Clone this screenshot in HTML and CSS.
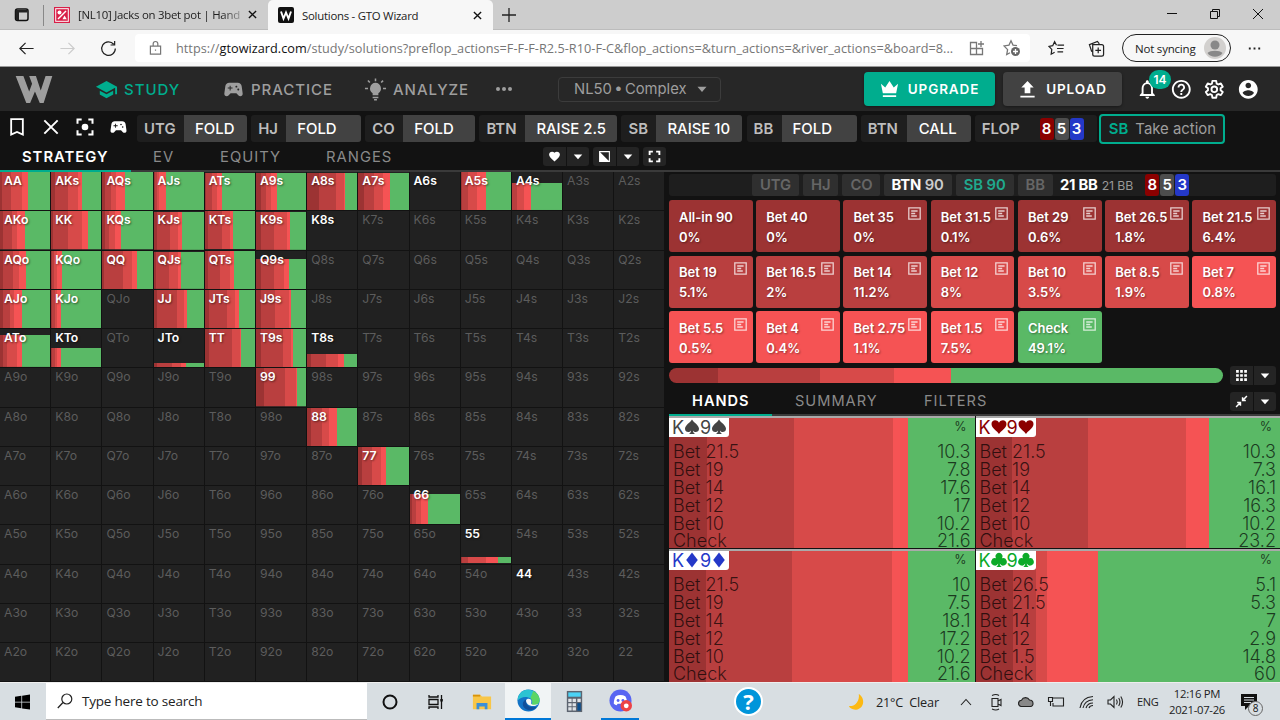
FILE: index.html
```
<!DOCTYPE html>
<html lang="en">
<head>
    <meta charset="UTF-8">
    <meta name="viewport" content="width=device-width, initial-scale=1.0">
    <title>Solutions - GTO Wizard</title>
    <link rel="stylesheet" href="styles.css">
</head>
<body>
    <svg class="sprite">
        <symbol id="gamepad" viewBox="0 0 24 24"><path d="M21.58 16.09l-1.09-7.66C20.21 6.46 18.52 5 16.53 5H7.47C5.48 5 3.79 6.46 3.51 8.43l-1.09 7.66C2.2 17.63 3.39 19 4.94 19c.68 0 1.32-.27 1.8-.75L9 16h6l2.25 2.25c.48.48 1.13.75 1.8.75 1.56 0 2.75-1.37 2.53-2.91zM11 11H9v2H8v-2H6v-1h2V8h1v2h2v1zm4-1c-.55 0-1-.45-1-1s.45-1 1-1 1 .45 1 1-.45 1-1 1zm2 3c-.55 0-1-.45-1-1s.45-1 1-1 1 .45 1 1-.45 1-1 1z"/></symbol>
        <symbol id="caret" viewBox="0 0 24 24"><path d="M6 9h12l-6 7z"/></symbol>
        <symbol id="close" viewBox="0 0 10 10"><path d="M1 1l8 8M9 1l-8 8" fill="none" stroke="currentColor" stroke-width="1.5"/></symbol>
        <symbol id="note" viewBox="0 0 13 13"><path d="M.8 .8h11.4v11.4H.8zM3.2 4h6.4M3.2 6.5h4M3.2 9h5.6" fill="none" stroke="currentColor" stroke-width="1.3"/></symbol>
        <symbol id="s" viewBox="0 0 16 16"><path d="M8 .5C6.500 3.500 1 6 1 9.800c0 3.400 4.300 4.400 6 1.700 0 1.800-.7 2.700-2 3.500h6c-1.300-.8-2-1.700-2-3.500 1.700 2.700 6 1.700 6-1.700C15 6 9.500 3.500 8 .5z"/></symbol>
        <symbol id="h" viewBox="0 0 16 16"><path d="M8 15C6.500 12 .5 9 .5 4.900.5.800 6 0 8 3.800 10 0 15.500.800 15.500 4.900 15.500 9 9.500 12 8 15z"/></symbol>
        <symbol id="d" viewBox="0 0 16 16"><path d="M8 .5L13.800 8 8 15.500 2.200 8z"/></symbol>
        <symbol id="c" viewBox="0 0 16 16"><path d="M8 .8a3.500 3.500 0 0 0-2.900 5.500A3.700 3.700 0 1 0 7.200 11.500C7.200 13 6.500 14.300 5.300 15h5.400c-1.200-.7-1.900-2-1.900-3.500A3.700 3.700 0 1 0 10.900 6.300 3.500 3.500 0 0 0 8 .8z"/></symbol>
    </svg>

    <!-- Browser -->
    <div class="tab-strip">
        <svg class="tab-menu" viewBox="0 0 16 16"><rect x="1.500" y="2" width="12.500" height="11.500" rx="2" fill="none" stroke="#111" stroke-width="1.500"/><path d="M1.500 3h12v2.500H5V13H2z"/></svg>
        <div class="tab">
            <svg class="favicon" viewBox="0 0 16 16"><path fill="#d81f48" d="M0 0h16v16H0z"/><path fill="#fff" d="M1.200 1.200h13.600v13.600H1.200z"/><path fill="#d81f48" d="M2.200 2.200h11.600v11.600H2.200z"/><path stroke="#fff" stroke-width="1.500" d="M12 4l-8 8"/><circle cx="5.500" cy="5.500" r="2" fill="#fff"/><path fill="#fff" d="M10.500 8.500l2.300 3.700H8.500z"/></svg>
            <span class="tab-title fade">[NL10] Jacks on 3bet pot | Hand</span>
            <svg class="tab-close"><use href="#close"/></svg>
        </div>
        <div class="tab active">
            <svg class="favicon" viewBox="0 0 16 16"><rect width="16" height="16" rx="2" fill="#111"/><path d="M3 4.500l2.500 7L8 5.500l2.500 6 2.500-7" fill="none" stroke="#fff" stroke-width="1.900"/></svg>
            <span class="tab-title">Solutions - GTO Wizard</span>
            <svg class="tab-close"><use href="#close"/></svg>
        </div>
        <svg class="new-tab" viewBox="0 0 14 14"><path d="M7 0v14M0 7h14" stroke="#222" stroke-width="1.300"/></svg>
        <div class="window-buttons">
            <svg viewBox="0 0 12 12"><path d="M1 5.500h10" stroke="#111"/></svg>
            <svg class="restore" viewBox="0 0 12 12"><path d="M1.500 3.500h7v7h-7zM3.500 3.500v-2h7v7h-2"/></svg>
            <svg viewBox="0 0 12 12"><path d="M1 1l10 10M11 1L1 11" stroke="#111"/></svg>
        </div>
    </div>
    <div class="toolbar">
        <svg class="tool back" viewBox="0 0 18 18"><path d="M16.500 9H2M8 3L2 9l6 6"/></svg>
        <svg class="tool forward" viewBox="0 0 18 18"><path d="M1.500 9H16M10 3l6 6-6 6"/></svg>
        <svg class="tool reload" viewBox="0 0 18 18"><path d="M14.500 4.500A7.200 7.200 0 1 0 16.200 9M15.500 1v4.300h-4.300"/></svg>
        <div class="address">
            <svg class="lock" viewBox="0 0 14 16"><path d="M1.500 6h11v8.500h-11zM4.500 6V3.500a2.500 2.500 0 0 1 5 0V6M7 9.500v1.500"/></svg>
            <span class="url">https://<b>gtowizard.com</b>/study/solutions?preflop_actions=F-F-F-R2.5-R10-F-C&amp;flop_actions=&amp;turn_actions=&amp;river_actions=&amp;board=8...</span>
            <svg class="apps" viewBox="0 0 16 16"><path d="M1.500 2.500h6v12h-6zM1.500 8.500h12v6h-12M12 1v6M9 4h6"/></svg>
            <svg class="star" viewBox="0 0 18 18"><path d="M14 6.700l-4-.6-2-4.300-2 4.300-5 .8 3.600 3.700-.9 5 3.300-1.800"/><circle class="plus" cx="12.500" cy="12.500" r="4.500"/><path d="M12.500 10v5M10 12.500h5" class="plus-line"/></svg>
        </div>
        <svg class="tool fav" viewBox="0 0 18 18"><path d="M9 5.500L7 1.800 5 6l-4 .8 3 3.200-.6 5 3.600-2M10 5.500h7M9.500 9h7M10 12.500h6"/></svg>
        <svg class="tool collect" viewBox="0 0 18 18"><path d="M4 12.500L1.500 5 10 1.500 12 4M5 5h9.500a2 2 0 0 1 2 2v8a2 2 0 0 1-2 2H7a2 2 0 0 1-2-2zM10.800 8v6M7.800 11h6"/></svg>
        <div class="sync">Not syncing
            <svg viewBox="0 0 22 22"><circle cx="11" cy="11" r="11" fill="#d2d0ce"/><circle cx="11" cy="8" r="4.500" fill="#888"/><path d="M3.500 16c3-3 12-3 15 0-3 5-12 5-15 0z" fill="#888"/></svg>
        </div>
        <svg class="tool dots" viewBox="0 0 18 18"><path d="M3 9h2M8 9h2M13 9h2"/></svg>
    </div>

    <!-- App header -->
    <header class="nav">
        <svg class="logo" viewBox="0 0 38 28"><path d="M0 0h8l6 16 3-8-3-8h7l5 15 5-15h7l-9 28h-4l-5-12-5 12h-4z"/></svg>
        <a class="nav-item study"><svg viewBox="0 0 24 24"><path d="M5 13.180v4L12 21l7-3.820v-4L12 17l-7-3.820zM12 3L1 9l11 6 9-4.910V17h2V9L12 3z"/></svg>STUDY</a>
        <a class="nav-item practice"><svg><use href="#gamepad"/></svg>PRACTICE</a>
        <a class="nav-item analyze"><svg viewBox="0 0 24 24"><path d="M12 5a6 6 0 0 0-3 11v2h6v-2a6 6 0 0 0-3-11zM9 19.500h6V21H9zM10.500 22h3v1.500h-3zM11.200 .5h1.600v3h-1.600zM1 10.200h3.200v1.600H1zM19.800 10.200H23v1.600h-3.200zM3.500 3.200l1.200-1.100 2 2-1.200 1.200zM17.300 4.200l2-2 1.200 1.100-2 2z"/></svg>ANALYZE</a>
        <svg class="more" viewBox="0 0 16 6"><circle cx="2" cy="3" r="2"/><circle cx="8" cy="3" r="2"/><circle cx="14" cy="3" r="2"/></svg>
        <div class="select">NL50 • Complex<svg><use href="#caret"/></svg></div>
        <button class="btn upgrade"><svg viewBox="0 0 20 20"><path d="M1 4l4.500 4L10 1l4.500 7L19 4l-2 10H3zM3 16h14v2H3z"/></svg>UPGRADE</button>
        <button class="btn upload"><svg viewBox="0 0 20 20"><path d="M10 1l6.500 7H13v6H7V8H3.500zM2.500 16.500h15v2h-15z"/></svg>UPLOAD</button>
        <div class="nav-icons">
            <div class="bell"><svg viewBox="0 0 24 24"><path d="M12 22c1.100 0 2-.9 2-2h-4c0 1.100.89 2 2 2zm6-6v-5c0-3.070-1.630-5.640-4.500-6.320V4c0-.83-.67-1.500-1.500-1.500s-1.500.67-1.500 1.500v.68C7.640 5.360 6 7.920 6 11v5l-2 2v1h16v-1l-2-2zm-2 1H8v-6c0-2.480 1.510-4.500 4-4.500s4 2.020 4 4.500v6z"/></svg><span class="badge">14</span></div>
            <svg viewBox="0 0 24 24"><path d="M11 18h2v-2h-2v2zm1-16C6.480 2 2 6.480 2 12s4.480 10 10 10 10-4.480 10-10S17.520 2 12 2zm0 18c-4.410 0-8-3.590-8-8s3.590-8 8-8 8 3.590 8 8-3.590 8-8 8zm0-14c-2.210 0-4 1.790-4 4h2c0-1.100.9-2 2-2s2 .9 2 2c0 2-3 1.750-3 5h2c0-2.250 3-2.500 3-5 0-2.210-1.790-4-4-4z"/></svg>
            <svg viewBox="0 0 24 24"><path fill="none" stroke="#fff" stroke-width="2" stroke-linejoin="round" d="M10 3h4l.5 2.900 1.800 1L19 5.800l2 3.400-2.300 1.800v2l2.300 1.800-2 3.400-2.700-1.100-1.800 1L14 21h-4l-.5-2.900-1.800-1L5 18.200l-2-3.400L5.300 13v-2L3 9.200l2-3.400 2.700 1.100 1.800-1z"/><circle cx="12" cy="12" r="3" fill="none" stroke="#fff" stroke-width="2"/></svg>
            <svg viewBox="0 0 24 24"><path d="M12 2C6.480 2 2 6.480 2 12s4.480 10 10 10 10-4.480 10-10S17.520 2 12 2zm0 3c1.660 0 3 1.340 3 3s-1.340 3-3 3-3-1.340-3-3 1.340-3 3-3zm0 14.200c-2.500 0-4.710-1.280-6-3.220.03-1.990 4-3.080 6-3.080 1.990 0 5.970 1.090 6 3.080-1.290 1.940-3.500 3.220-6 3.220z"/></svg>
        </div>
    </header>

    <!-- Action history -->
    <div class="history">
        <div class="history-icons">
            <svg viewBox="0 0 24 24"><path d="M5 2.500h14v18.500l-7-3-7 3z" fill="none" stroke="#fff" stroke-width="2.200"/></svg>
            <svg viewBox="0 0 24 24"><path d="M4 4l16 16M20 4L4 20" stroke="#fff" stroke-width="2.300"/></svg>
            <svg viewBox="0 0 24 24"><path d="M8 3H3v5M16 3h5v5M8 21H3v-5M16 21h5v-5" fill="none" stroke="#fff" stroke-width="2.400"/><circle cx="12" cy="12" r="4"/></svg>
            <svg class="pad"><use href="#gamepad"/></svg>
        </div>
        <div class="step utg"><b>UTG</b><span>FOLD</span></div>
        <div class="step hj"><b>HJ</b><span>FOLD</span></div>
        <div class="step co"><b>CO</b><span>FOLD</span></div>
        <div class="step btn-r"><b>BTN</b><span>RAISE 2.5</span></div>
        <div class="step sb"><b>SB</b><span>RAISE 10</span></div>
        <div class="step bb"><b>BB</b><span>FOLD</span></div>
        <div class="step btn-c"><b>BTN</b><span>CALL</span></div>
        <div class="step flop"><b>FLOP</b><div class="board"><i class="red">8</i><i class="grey">5</i><i class="blue">3</i></div></div>
        <div class="take"><b>SB</b>Take action</div>
    </div>

    <main class="main">
        <section class="left">
            <div class="tabs">
                <a class="on strategy">STRATEGY</a><a class="ev">EV</a><a class="equity">EQUITY</a><a class="ranges">RANGES</a>
                <div class="split"><svg viewBox="0 0 24 24"><path d="M12 21.350l-1.450-1.320C5.400 15.360 2 12.280 2 8.500 2 5.420 4.420 3 7.500 3c1.740 0 3.410.81 4.500 2.090C13.090 3.810 14.760 3 16.500 3 19.580 3 22 5.420 22 8.500c0 3.780-3.400 6.860-8.550 11.540L12 21.350z"/></svg><svg class="arrow"><use href="#caret"/></svg></div>
                <div class="split"><svg viewBox="0 0 24 24"><path d="M3 3h18v18H3z" fill="none" stroke="#fff" stroke-width="2"/><path d="M3 3v18h18z"/></svg><svg class="arrow"><use href="#caret"/></svg></div>
                <div class="split single"><svg viewBox="0 0 24 24"><path d="M9 3H3v6M15 3h6v6M9 21H3v-6M15 21h6v-6" fill="none" stroke="#fff" stroke-width="3.500"/></svg></div>
            </div>
            <div class="range" id="range"></div>
        </section>

        <section class="right">
            <div class="players">
                <span>UTG</span><span>HJ</span><span>CO</span><span class="live">BTN <em>90</em></span><span class="hero">SB 90</span><span>BB</span>
                <strong>21 BB</strong><small>21 BB</small>
                <div class="board"><i class="red">8</i><i class="grey">5</i><i class="blue">3</i></div>
            </div>
            <div class="bets" id="bets"></div>
            <div class="freq">
                <div class="freq-bar" id="freq-bar"></div>
                <div class="split"><svg viewBox="0 0 24 24"><path d="M2 2h5v5H2zM9.500 2h5v5h-5zM17 2h5v5h-5zM2 9.500h5v5H2zM9.500 9.500h5v5h-5zM17 9.500h5v5h-5zM2 17h5v5H2zM9.500 17h5v5h-5zM17 17h5v5h-5z"/></svg><svg class="arrow"><use href="#caret"/></svg></div>
            </div>
            <div class="hand-tabs">
                <a class="on">HANDS</a><a class="summary">SUMMARY</a><a>FILTERS</a>
                <div class="split"><svg viewBox="0 0 24 24"><path d="M22 2l-8 8M2 22l8-8M14 4v6h6M4 14h6v6" fill="none" stroke="#fff" stroke-width="2.800"/></svg><svg class="arrow"><use href="#caret"/></svg></div>
            </div>
            <div class="hands" id="hands"></div>
        </section>
    </main>

    <!-- Windows taskbar -->
    <footer class="taskbar">
        <div class="start"><svg viewBox="0 0 16 16"><path d="M0 2.300L6.800 1.300v6.300H0zM7.600 1.200L16 0v7.600H7.600zM0 8.400h6.800v6.300L0 13.700zM7.600 8.400H16V16l-8.400-1.200z"/></svg></div>
        <div class="search"><svg viewBox="0 0 16 16"><circle cx="9.800" cy="6" r="5" fill="none" stroke="#222" stroke-width="1.200"/><path d="M6 9.500L.8 15" stroke="#222" stroke-width="1.300"/></svg>Type here to search</div>
        <div class="app"><svg viewBox="0 0 20 20"><circle cx="10" cy="10" r="6.500" fill="none" stroke="#111" stroke-width="2"/></svg></div>
        <div class="app"><svg viewBox="0 0 20 20"><path d="M3 3v2h9V3M3 17v-2h9v2M3 7.500h9v5H3zM15.500 3v14" fill="none" stroke="#111" stroke-width="1.300"/><path d="M14.300 7h2.500v2.500h-2.500z"/></svg></div>
        <div class="app"><svg viewBox="0 0 22 20"><path d="M1 2h8l2 2h10v14H1z" fill="#f8c648"/><path d="M1 2h8v2H1z" fill="#d8930c"/><path d="M5 11h12v7h-3v-3H8v3H5z" fill="#3a8fd8"/></svg></div>
        <div class="app current"><svg class="big" viewBox="0 0 24 24"><circle cx="12" cy="12" r="11.500" fill="#1373c6"/><path d="M1 9C3 1 11-1 17 2c5 2.500 7 7 6.500 10.500-.5 3.500-4 5-8.500 4 2-2.500 1.500-7-4-8C7 7.800 3 9 .8 12z" fill="#2bc3d2"/><path d="M17 2c5 2.500 7 7 6.500 10.500-.5 3.500-4 5-8.500 4 2-2 1-5-1-7z" fill="#5bd565"/><path d="M9.500 11c-1 5 3 9.500 11 7.500C16 25 6.500 22 6 16c-.1-2 1.200-4 3.500-5z" fill="#104f9b"/><path d="M9.500 11.500c-.5 4 4 7.500 10 6 2-.8 3-2 3-2-4 1.800-9 1.200-7.500-2 .6-3-3.500-4.500-5.500-2z" fill="#f5f7f8"/></svg></div>
        <div class="app"><svg class="big" viewBox="0 0 24 24"><path d="M4 1h16v22H4z" fill="#5c6470"/><path d="M5.500 2.500h13V7h-13z" fill="#4bd3f5"/><path d="M5.500 9H9v3.500H5.500zM10 9h3.500v3.500H10zM15 9h3.500v3.500H15zM5.500 13.700H9V17H5.500zM10 13.700h3.500V17H10zM5.500 18H9v3.500H5.500zM10 18h3.500v3.500H10z" fill="#dfe3e7"/><path d="M15 13.700h3.500v7.800H15z" fill="#0b4f8e"/></svg></div>
        <div class="app open"><svg class="big" viewBox="0 0 24 24"><circle cx="12" cy="12" r="11.500" fill="#5865f2"/><path d="M7 7.500c3-1.500 7-1.500 10 0 1.500 2.500 2 5 2 8-1 1-2 1.300-3 1.500l-1-1.500H9L8 17c-1-.2-2-.5-3-1.500 0-3 .5-5.500 2-8z" fill="#fff"/><circle cx="9.500" cy="12" r="1.500" fill="#5865f2"/><circle cx="14.500" cy="12" r="1.500" fill="#5865f2"/><circle cx="18" cy="17.500" r="6" fill="#ed4245"/><circle cx="18" cy="17.500" r="2.500" fill="#fff"/></svg></div>
        <div class="help">?</div>
        <div class="weather"><svg viewBox="0 0 20 20"><path d="M12 1c7 4 7 16-3 17.500-4 .3-7-1.500-8-4C9 15 13 8 12 1z" fill="#fcb913"/></svg>21°C&nbsp; Clear</div>
        <div class="tray">
            <svg viewBox="0 0 18 18"><path d="M4 12l5-5.500 5 5.500"/></svg>
            <svg viewBox="0 0 18 18"><path d="M5 5.500h6v8H5zM11 8l3-1.500v6L11 11M5 2.500q4-2 7 0M5 16q4 2 7 0"/></svg>
            <svg viewBox="0 0 18 18"><path d="M4 13.500a3.200 3.200 0 0 1 .5-6.300 4.500 4.500 0 0 1 8-.2c4.500 0 4.500 6.500 1 6.500z" fill="#888"/></svg>
            <svg viewBox="0 0 18 18"><path d="M6 5h10.500v8H6v-3M1.500 4.500h4v4h-4zM3.500 8.500V13"/></svg>
            <svg viewBox="0 0 18 18"><path d="M3 15C4 8 9 4 16 3.500M6 15c1-5 5-8 10-8.300M9 15c1-3 3.500-5 7-5M12 15c.5-1.500 2-2.500 4-2.500"/></svg>
            <svg viewBox="0 0 18 18"><path d="M1 7h2.500L7 3.500v11L3.500 11H1zM9.500 6.500q1.500 2.500 0 5M11.700 5q2.500 4 0 8M13.800 3.500q3.500 5.500 0 11"/></svg>
        </div>
        <span class="lang">ENG</span>
        <div class="clock">12:16 PM<br>2021-07-26</div>
        <div class="notices"><svg viewBox="0 0 16 16"><path d="M0 0h16v12H8l-4 4v-4H0z"/><path d="M3 3.500h10M3 6h10M3 8.500h7" stroke="#d8dee2"/></svg><span>8</span></div>
    </footer>

    <script>
        const colors = ['#9c3333', '#b93f3f', '#d74a49', '#f55354', '#5ab966'];

        // stops are the cumulative % where each bet size ends, the rest is check
        function gradient(stops) {
            let from = 0;
            const parts = [...stops, 100].map((to, i) => {
                const part = `${colors[i]} ${from}% ${to}%`;
                from = to;
                return part;
            });
            return `linear-gradient(to right, ${parts.join(', ')})`;
        }

        // hand: [stops, height %]
        const strategy = {
            AA: [[4, 22, 43, 57], 100], AKs: [[7, 33, 54, 63], 100], AQs: [[6, 17, 28, 45], 100],
            AJs: [[2, 6, 11, 25], 100], ATs: [[3, 14, 24, 33], 98], A9s: [[10, 21, 31, 42], 98],
            A8s: [[25, 59, 74, 77], 98], A7s: [[11, 32, 49, 62], 98], A6s: [[], 0],
            A5s: [[2, 14, 33, 50], 100], A4s: [[1, 11, 25, 38], 71],
            AKo: [[5, 23, 33, 51], 100], KK: [[3, 33, 63, 73], 100], KQs: [[5, 14, 25, 38], 100],
            KJs: [[6, 33, 48, 57], 97], KTs: [[7, 33, 49, 57], 98], K9s: [[9, 36, 62, 68], 97], K8s: [[], 0],
            AQo: [[5, 26, 38, 53], 100], KQo: [[1, 6, 12, 22], 100], QQ: [[4, 41, 58, 68], 100],
            QJs: [[5, 30, 49, 54], 97], QTs: [[7, 30, 50, 59], 100], Q9s: [[9, 37, 56, 66], 79],
            AJo: [[6, 20, 29, 44], 100], KJo: [[1, 8, 13, 20], 100], JJ: [[7, 46, 61, 66], 100],
            JTs: [[8, 45, 60, 68], 100], J9s: [[9, 38, 66, 70], 100],
            ATo: [[5, 14, 33, 43], 84], KTo: [[1, 8, 12, 20], 51], JTo: [[7, 37, 54, 64], 11],
            TT: [[9, 54, 70, 72], 100], T9s: [[11, 54, 70, 73], 100], T8s: [[9, 39, 63, 75], 35],
            99: [[16, 58, 80, 83], 100], 88: [[8, 30, 44, 60], 100], 77: [[8, 28, 45, 54], 100],
            66: [[4, 12, 22, 36], 79], 55: [[3, 15, 50, 75], 16], 44: [[], 0]
        };

        const ranks = 'AKQJT98765432';
        const range = document.getElementById('range');
        for (let row = 0; row < 13; row++) {
            for (let col = 0; col < 13; col++) {
                let name = ranks[row] + ranks[col];
                if (col > row) name += 's';
                if (col < row) name = ranks[col] + ranks[row] + 'o';
                const cell = document.createElement('div');
                cell.className = 'cell';
                cell.textContent = name;
                if (strategy[name]) {
                    const [stops, height] = strategy[name];
                    cell.classList.add('in-range');
                    if (height) {
                        cell.style.backgroundImage = gradient(stops);
                        cell.style.backgroundSize = `100% ${height}%`;
                    }
                }
                range.appendChild(cell);
            }
        }

        // label, frequency, color index
        const bets = [
            ['All-in 90', '0%', 0], ['Bet 40', '0%', 0], ['Bet 35', '0%', 0], ['Bet 31.5', '0.1%', 0],
            ['Bet 29', '0.6%', 0], ['Bet 26.5', '1.8%', 0], ['Bet 21.5', '6.4%', 0],
            ['Bet 19', '5.1%', 1], ['Bet 16.5', '2%', 1], ['Bet 14', '11.2%', 1], ['Bet 12', '8%', 2],
            ['Bet 10', '3.5%', 2], ['Bet 8.5', '1.9%', 2], ['Bet 7', '0.8%', 3],
            ['Bet 5.5', '0.5%', 3], ['Bet 4', '0.4%', 3], ['Bet 2.75', '1.1%', 3], ['Bet 1.5', '7.5%', 3],
            ['Check', '49.1%', 4]
        ];
        document.getElementById('bets').innerHTML = bets.map(([label, freq, color], i) => `
            <div class="bet color-${color}">
                <div>${label}<br>${freq}</div>
                ${i > 1 ? '<svg><use href="#note"/></svg>' : ''}
            </div>`).join('');

        document.getElementById('freq-bar').style.backgroundImage = gradient([8.9, 27.2, 40.6, 50.9]);

        const hands = [
            { suit: 's', stops: [12.4, 40.9, 73.3, 78.1], rows: [['Bet 21.5', 10.3], ['Bet 19', 7.8], ['Bet 14', 17.6], ['Bet 12', 17], ['Bet 10', 10.2], ['Check', 21.6]] },
            { suit: 'h', stops: [11.7, 36.9, 69.1, 76.7], rows: [['Bet 21.5', 10.3], ['Bet 19', 7.3], ['Bet 14', 16.1], ['Bet 12', 16.3], ['Bet 10', 10.2], ['Check', 23.2]] },
            { suit: 'd', stops: [12, 40.3, 73, 78.1], rows: [['Bet 21.5', 10], ['Bet 19', 7.5], ['Bet 14', 18.1], ['Bet 12', 17.2], ['Bet 10', 10.2], ['Check', 21.6]] },
            { suit: 'c', stops: [12.2, 19.8, 23.5, 40], rows: [['Bet 26.5', 5.1], ['Bet 21.5', 5.3], ['Bet 14', 7], ['Bet 12', 2.9], ['Bet 1.5', 14.8], ['Check', 60]] }
        ];
        document.getElementById('hands').innerHTML = hands.map(hand => `
            <div class="hand" style="background-image: ${gradient(hand.stops)}">
                <div class="hand-head">
                    <span class="combo suit-${hand.suit}">K<svg><use href="#${hand.suit}"/></svg>9<svg><use href="#${hand.suit}"/></svg></span>
                    <span class="percent">%</span>
                </div>
                ${hand.rows.map(([label, value]) => `<div class="hand-row"><span>${label}</span><span>${value}</span></div>`).join('')}
            </div>`).join('');
    </script>
</body>
</html>
```
FILE: styles.css
```
* {
    box-sizing: border-box;
}
body {
    margin: 0;
    width: 1280px;
    height: 720px;
    overflow: hidden;
    background: #121212;
    font-family: Inter, sans-serif;
    color: #fff;
    display: flex;
    flex-direction: column;
}
svg {
    display: block;
    flex: none;
    fill: currentColor;
}
b, i, em {
    font-style: normal;
}
.sprite {
    width: 0;
    height: 0;
    position: absolute;
}

/* Browser */
.tab-strip {
    height: 30px;
    flex: none;
    display: flex;
    background: #cdcdcd;
    border-bottom: 1px solid #bcbcbc;
    font-family: "Open Sans", sans-serif;
    font-size: 11.4px;
    letter-spacing: -0.25px;
    color: #222;
}
.tab-menu {
    width: 16px;
    height: 16px;
    margin: 7px 13px 0 14px;
}
.tab {
    width: 225px;
    display: flex;
    align-items: center;
    padding: 0 11px 0 10px;
    border-left: 1px solid #8a8a8a;
    border-image: linear-gradient(transparent 6px, #888 6px, #888 25px, transparent 25px) 1;
}
.tab.active {
    height: 30px;
    border: 0;
    background: #f7f7f7;
    border-radius: 5px 5px 0 0;
}
.favicon {
    width: 16px;
    height: 16px;
}
.tab-title {
    flex: 1;
    margin-left: 8px;
    white-space: nowrap;
}
.fade {
    -webkit-mask-image: linear-gradient(to right, #000 85%, transparent 100%);
}
.tab-close {
    width: 9px;
    height: 9px;
    color: #111;
}
.new-tab {
    width: 14px;
    height: 14px;
    margin: 8px 0 0 9px;
}
.window-buttons {
    margin-left: auto;
    display: flex;
    gap: 31px;
    padding: 8px 16px 0 0;
}
.window-buttons svg {
    width: 12px;
    height: 12px;
}
.restore {
    fill: none;
    stroke: #111;
}
.toolbar {
    height: 37px;
    flex: none;
    display: flex;
    align-items: center;
    background: #f7f7f7;
    border-bottom: 1px solid #999;
    color: #222;
    font-family: "Open Sans", sans-serif;
}
.toolbar svg {
    fill: none;
    stroke: #222;
    stroke-width: 1.3;
}
.tool {
    width: 17px;
    height: 17px;
}
.back {
    margin-left: 18px;
}
.toolbar .forward {
    margin-left: 24px;
    stroke: #ccc;
}
.reload {
    margin-left: 24px;
}
.address {
    width: 895px;
    height: 28px;
    margin-left: 18px;
    padding: 0 9px 0 14px;
    display: flex;
    align-items: center;
    background: #fff;
    border-radius: 4px;
}
.toolbar .address svg {
    stroke: #777;
}
.lock {
    width: 13px;
    height: 16px;
}
.url {
    flex: 1;
    margin-left: 14px;
    font-size: 12.7px;
    letter-spacing: 0.03px;
    color: #767676;
    white-space: nowrap;
}
.url b {
    font-weight: 400;
    color: #111;
}
.apps {
    width: 16px;
    height: 16px;
    margin-right: 18px;
}
.star {
    width: 18px;
    height: 18px;
}
.plus {
    fill: #666;
    stroke: none;
}
.plus-line {
    stroke: #fff;
}
.fav {
    margin-left: 18px;
}
.collect {
    margin-left: 23px;
}
.sync {
    width: 109px;
    height: 28px;
    margin-left: 17px;
    padding: 0 4px 0 12px;
    display: flex;
    align-items: center;
    justify-content: space-between;
    border: 1px solid #222;
    border-radius: 14px;
    font-size: 11.5px;
    letter-spacing: -0.2px;
    white-space: nowrap;
}
.toolbar .sync svg {
    width: 22px;
    height: 22px;
    stroke: none;
}
.toolbar .dots {
    margin-left: 15px;
    stroke-width: 2;
}

/* App header */
.nav {
    height: 44px;
    flex: none;
    display: flex;
    align-items: center;
    background: #272727;
    font-size: 15px;
    color: #9e9e9e;
}
.logo {
    width: 38px;
    height: 27px;
    margin-left: 15px;
}
.nav-item {
    display: flex;
    align-items: center;
    gap: 6px;
    letter-spacing: 0.95px;
    font-weight: 500;
}
.nav-item svg {
    width: 23px;
    height: 23px;
}
.study {
    margin-left: 42px;
    width: 127px;
    color: #00ad8e;
}
.practice {
    width: 142px;
}
.analyze {
    width: 132px;
}
.more {
    width: 16px;
    height: 6px;
}
.select {
    width: 163px;
    height: 25px;
    margin-left: 46px;
    padding: 0 9px 0 15px;
    display: flex;
    align-items: center;
    justify-content: space-between;
    border: 1px solid #3c3c3c;
    border-radius: 4px;
    font-size: 14.8px;
    word-spacing: -1.8px;
    white-space: nowrap;
}
.select svg {
    width: 18px;
    height: 18px;
}
.btn {
    height: 34px;
    padding: 0;
    display: flex;
    align-items: center;
    justify-content: center;
    gap: 9px;
    border: none;
    border-radius: 4px;
    color: #fff;
    font-family: Inter, sans-serif;
    font-size: 13.5px;
    font-weight: 600;
    letter-spacing: 0.9px;
    box-shadow: 0 1px 3px rgba(0, 0, 0, 0.4);
}
.btn svg {
    width: 19px;
    height: 19px;
}
.upgrade {
    width: 131px;
    margin-left: 143px;
    background: #00ad8e;
}
.upload {
    width: 119px;
    margin-left: 8px;
    background: #424242;
}
.nav-icons {
    display: flex;
    gap: 11px;
    margin-left: 14px;
    color: #fff;
}
.nav-icons svg {
    width: 22.6px;
    height: 22.6px;
}
.bell {
    position: relative;
}
.badge {
    position: absolute;
    left: 13px;
    top: -8px;
    width: 22px;
    height: 19px;
    border-radius: 10px;
    background: #00ad8e;
    font-size: 12px;
    font-weight: 600;
    line-height: 19px;
    text-align: center;
}

/* Action history */
.history {
    height: 35px;
    flex: none;
    display: flex;
    align-items: center;
    gap: 4.1px;
    font-size: 14.9px;
}
.history-icons {
    width: 133px;
    padding: 0 0 4px 7px;
    display: flex;
    gap: 14px;
}
.history-icons svg {
    width: 20px;
    height: 20px;
}
.history-icons .pad {
    width: 23px;
    margin-left: -2px;
}
.step {
    width: 110px;
    height: 27px;
    display: flex;
    align-items: center;
    background: #1e1e1e;
    border-radius: 3px;
    overflow: hidden;
}
.step b {
    padding-left: 7px;
    font-weight: 600;
    color: #bdbdbd;
}
.step span {
    height: 27px;
    line-height: 28px;
    margin-left: auto;
    padding-left: 11px;
    background: #424242;
    font-weight: 500;
    white-space: nowrap;
}
.utg span {
    width: 63px;
}
.hj span, .bb span {
    width: 75px;
}
.co span {
    width: 72px;
}
.btn-r {
    width: 138px;
}
.btn-r span {
    width: 92px;
}
.sb {
    width: 121px;
}
.sb span {
    width: 86px;
}
.btn-c span {
    width: 64px;
    padding-left: 12px;
}
.flop {
    width: 122px;
}
.board {
    display: flex;
    gap: 1px;
    margin-left: 20px;
}
.board i {
    width: 14px;
    height: 22px;
    line-height: 22px;
    border-radius: 3px;
    text-align: center;
    font-size: 15px;
    font-weight: 600;
    color: #fff;
}
.red {
    background: #8b0000;
}
.grey {
    background: #4d4d4d;
}
.blue {
    background: #2438c8;
}
.take {
    width: 126px;
    height: 30px;
    margin-left: -2px;
    padding-left: 8px;
    display: flex;
    align-items: center;
    gap: 7px;
    border: 2px solid #00ad8e;
    border-radius: 4px;
    background: #1e1e1e;
    color: #9e9e9e;
    white-space: nowrap;
}
.take b {
    font-weight: 600;
    color: #00ad8e;
}

.main {
    display: flex;
    flex: 1;
    min-height: 0;
}
.left {
    width: 666px;
    display: flex;
    flex-direction: column;
}
.tabs {
    height: 26px;
    flex: none;
    display: flex;
    align-items: center;
    border-bottom: 2px solid #3a3a3a;
    font-size: 14.8px;
    letter-spacing: 1px;
    color: #8a8a8a;
}
.tabs a {
    height: 26px;
    line-height: 22px;
    margin-top: 2px;
}
.on {
    font-weight: 600;
    color: #fff;
}
.tabs .strategy {
    width: 131px;
    padding-left: 22px;
    border-bottom: 2px solid #00ad8e;
}
.ev {
    margin-left: 22px;
    width: 67px;
}
.equity {
    width: 106px;
}
.ranges {
    width: 217px;
}
.split {
    height: 19px;
    display: flex;
    flex: none;
    border-radius: 3px;
    background: #242424;
    color: #fff;
    margin-right: 4px;
}
.tabs .split {
    margin-top: -3px;
}
.split svg {
    width: 23px;
    height: 19px;
    padding: 3px 5px;
}
.split .arrow {
    padding: 1px 2px;
    border-left: 1px solid #121212;
}
.split.single {
    margin-right: 0;
}

/* 13x13 range */
.range {
    flex: 1;
    display: grid;
    grid-template-columns: repeat(13, 51.2px);
    grid-template-rows: repeat(13, 39.25px);
    min-height: 0;
}
.cell {
    padding: 1px 0 0 4px;
    border: solid #121212;
    border-width: 0 1px 1px 0;
    background-color: #212121;
    background-repeat: no-repeat;
    background-position: left bottom;
    font-size: 12.2px;
    line-height: 15px;
    color: #5c5c5c;
}
.in-range {
    font-weight: 600;
    color: #fff;
    text-shadow: 1px 1px 2px rgba(0, 0, 0, 0.5);
}

/* Right panel */
.right {
    padding-left: 3px;
    margin-top: 24px;
    border-top: 2px solid #3a3a3a;
    flex: 1;
}
.players {
    width: 607px;
    height: 22px;
    margin-top: 2px;
    padding-left: 83px;
    display: flex;
    align-items: center;
    gap: 4px;
    background: #1e1e1e;
    border-radius: 3px;
    font-size: 14.8px;
    letter-spacing: -0.1px;
}
.players span {
    height: 22px;
    line-height: 22px;
    padding: 0 8px;
    background: #2f2f2f;
    border-radius: 2px;
    color: #666;
    font-weight: 600;
    white-space: nowrap;
}
.players .live {
    padding: 0 8px 0 7px;
    color: #fff;
    font-weight: 700;
}
.live em {
    font-weight: 600;
    color: #ccc;
}
.players .hero {
    color: #1fa98e;
}
.players strong {
    margin-left: 3px;
    letter-spacing: -0.2px;
    white-space: nowrap;
}
.players small {
    font-size: 12.3px;
    color: #999;
    white-space: nowrap;
}
.players .board {
    margin-left: 8px;
}
.bets {
    width: 607px;
    margin-top: 4px;
    display: grid;
    grid-template-columns: repeat(7, 1fr);
    grid-auto-rows: 52px;
    gap: 3.7px;
}
.bet {
    display: flex;
    justify-content: space-between;
    padding: 6.5px 6px 0 10px;
    border-radius: 3px;
    font-size: 13px;
    font-weight: 600;
    line-height: 20px;
    white-space: nowrap;
    text-shadow: 1px 1px 2px rgba(0, 0, 0, 0.4);
}
.bet div {
    width: 0;
}
.bet svg {
    width: 13px;
    height: 13px;
    opacity: 0.75;
}
.color-0 {
    background: #9c3333;
}
.color-1 {
    background: #b93f3f;
}
.color-2 {
    background: #d74a49;
}
.color-3 {
    background: #f55354;
}
.color-4 {
    background: #5ab966;
}
.freq {
    height: 19px;
    margin-top: 3px;
    display: flex;
    align-items: center;
    gap: 7px;
}
.freq-bar {
    width: 554px;
    height: 15px;
    border-radius: 8px;
}
.hand-tabs {
    height: 31px;
    display: flex;
    align-items: center;
    border-bottom: 2px solid #3a3a3a;
    font-size: 14.6px;
    letter-spacing: 1px;
    color: #8a8a8a;
}
.hand-tabs a {
    height: 31px;
    line-height: 33px;
    margin-top: 2px;
}
.hand-tabs .on {
    width: 103px;
    padding-left: 23px;
    margin-right: 23px;
    border-bottom: 2px solid #00ad8e;
}
.hand-tabs .summary {
    width: 129px;
}
.hand-tabs .split {
    margin: 3px 4px 0 auto;
}
.hands {
    width: 611px;
    display: grid;
    grid-template-columns: 305.5px 304.5px;
    grid-template-rows: 132px 133px;
    gap: 1px;
}
.hand {
    overflow: hidden;
    border-top: 2px solid #aaa;
    color: rgba(0, 0, 0, 0.7);
}
.hand-head {
    height: 26px;
    margin-top: -1px;
    display: flex;
    justify-content: space-between;
}
.combo {
    width: 60px;
    height: 20px;
    padding-left: 3px;
    display: flex;
    align-items: center;
    background: #fff;
    border-radius: 0 0 3px 0;
    font-size: 18px;
}
.combo svg {
    width: 16px;
    height: 16px;
}
.suit-s {
    color: #444;
}
.suit-h {
    color: #8b0000;
}
.suit-d {
    color: #2438c8;
}
.suit-c {
    color: #0caa28;
}
.percent {
    padding: 2px 8px 0 0;
    font-size: 12.5px;
}
.hand-row {
    display: flex;
    justify-content: space-between;
    padding: 0 4px;
    font-size: 18px;
    font-weight: 300;
    line-height: 17.8px;
}

/* Taskbar */
.taskbar {
    height: 38px;
    flex: none;
    display: flex;
    align-items: center;
    background: #d8dee2;
    border-top: 1px solid #eee;
    color: #222;
    font-family: "Open Sans", sans-serif;
    font-size: 12px;
}
.start {
    width: 46px;
    padding-left: 15px;
    color: #000;
}
.start svg {
    width: 15px;
    height: 16px;
}
.search {
    width: 321px;
    height: 37px;
    padding-left: 11px;
    display: flex;
    align-items: center;
    gap: 9px;
    background: #fff;
    border-bottom: 1px solid #bbb;
    font-size: 13.5px;
    letter-spacing: -0.2px;
}
.search svg {
    width: 16px;
    height: 16px;
}
.app {
    width: 46px;
    height: 37px;
    display: flex;
    align-items: center;
    justify-content: center;
    color: #111;
}
.app svg {
    width: 20px;
    height: 20px;
}
.app .big {
    width: 23px;
    height: 23px;
}
.current {
    background: #f1f4f5;
    border-bottom: 2px solid #0078d7;
}
.open {
    width: 38px;
    margin-left: 4px;
    border-bottom: 2px solid #0078d7;
}
.help {
    width: 29px;
    height: 29px;
    margin-left: 95px;
    border: 2px solid #fff;
    border-radius: 50%;
    background: #0095da;
    color: #fff;
    font-size: 22px;
    font-weight: 700;
    line-height: 25px;
    text-align: center;
}
.weather {
    width: 188px;
    padding-left: 85px;
    display: flex;
    align-items: center;
    gap: 10px;
    white-space: nowrap;
    font-size: 12.7px;
    letter-spacing: -0.2px;
}
.weather svg {
    width: 18px;
    height: 20px;
}
.tray {
    display: flex;
    gap: 12px;
    margin-left: 6px;
}
.tray svg {
    width: 18px;
    height: 18px;
    fill: none;
    stroke: #222;
    stroke-width: 1.1;
}
.lang {
    width: 32px;
    margin-left: 12px;
    font-size: 11px;
    letter-spacing: -0.3px;
}
.clock {
    width: 56px;
    font-size: 11.3px;
    letter-spacing: -0.3px;
    line-height: 16px;
    text-align: center;
    white-space: nowrap;
}
.notices {
    position: relative;
    margin-left: 16px;
    color: #111;
}
.notices svg {
    width: 16px;
    height: 16px;
}
.notices span {
    position: absolute;
    left: 7px;
    top: 7px;
    width: 15px;
    height: 15px;
    border: 1px solid #666;
    border-radius: 50%;
    background: #d8dee2;
    font-size: 10px;
    line-height: 13px;
    text-align: center;
}
```
